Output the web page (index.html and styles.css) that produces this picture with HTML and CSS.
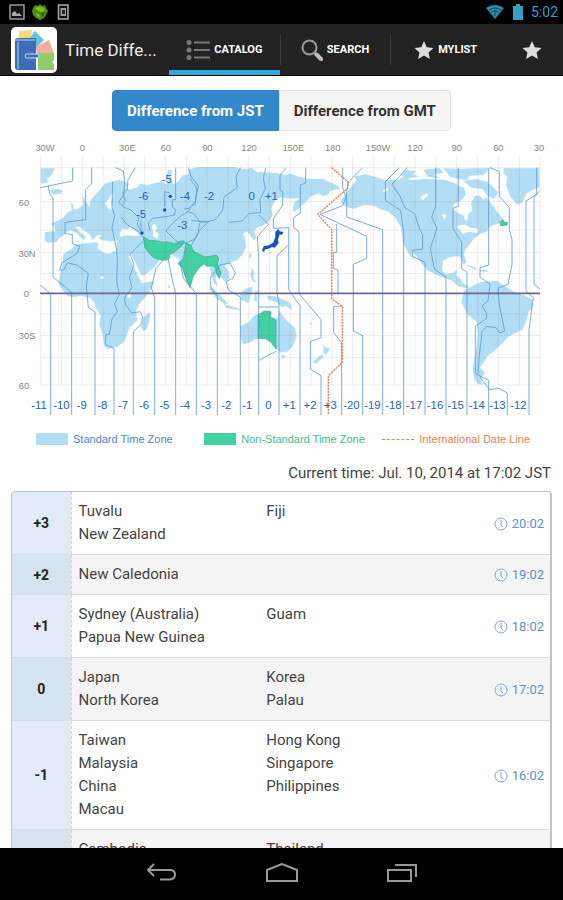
FILE: index.html
```html
<!DOCTYPE html>
<html lang="en">
<head>
    <meta charset="UTF-8">
    <meta name="viewport" content="width=device-width, initial-scale=1">
    <title>Time Difference</title>
    <link rel="stylesheet" href="styles.css">
</head>
<body>
<div class="status">
    <svg width="16" height="16" viewBox="0 0 16 16"><path d="M1 1h14v14H1z" fill="#111" stroke="#999" stroke-width="1.5"/><path d="M3 12V9l3-2 2 3 2-1 3 3z" fill="#aaa"/></svg>
    <svg width="16" height="16" viewBox="0 0 16 16"><path d="M8 0l2 2 3-1 1 3 2 3-2 4-2 3-4 2-4-2-3-3-1-4 1-3 2-3 3 1z" fill="#4c8a16"/><path d="M3 4l5-2 5 3-2 3-5-1zM4 9l3 1 1 4-3-2z" fill="#7fb92b"/><path d="M9 9l4-1-2 5z" fill="#2f6110"/></svg>
    <svg width="16" height="16" viewBox="0 0 16 16"><path d="M3.500 1h9.500v14H3.500z" fill="#111" stroke="#aaa" stroke-width="1.500"/><path d="M5.500 4h5.500v8H5.500z" fill="#999"/><path d="M7 6h3v4H7z" fill="#222"/></svg>
    <span class="space"></span>
    <svg width="20" height="16" viewBox="0 0 20 16"><path d="M1 4Q10-2 19 4L10 15z" fill="#2d8db0"/><path d="M4 6q6-4 12 0M6 8q4-3 8 0M10 6v6" fill="none" stroke="#12465a" stroke-width="1"/></svg>
    <svg width="12" height="16" viewBox="0 0 12 16"><path d="M4 0h4v2h3v14H1V2h3z" fill="#3a9fc6"/></svg>
    <span class="clock">5:02</span>
</div>
<header class="bar">
    <svg class="logo" width="46" height="46" viewBox="0 0 46 46">
        <rect width="46" height="46" rx="5" fill="#fff"/>
        <path d="M8 4l13-1-2 12H8z" fill="#f6da74"/>
        <path d="M17 13l7-9 9 9-8 8z" fill="#65c7d6"/>
        <path d="M25 20l13-7 5 14H26z" fill="#f4aaa5"/>
        <path d="M27 26h16v7l-2 2 2 2v6H27z" fill="#8dce68"/>
        <path d="M4 13q0-2 3-2h18v32H7q-3 0-3-3z" fill="#3e6db8"/>
        <path d="M4 13h20M7 15v27" stroke="#bdd3ef" stroke-width="1" fill="none"/>
        <rect x="14" y="27" width="14" height="4" rx="2" fill="#3e6db8" stroke="#c8dcf3"/>
    </svg>
    <h1>Time Diffe...</h1>
    <nav class="tabs">
        <a class="tab active" href="#catalog">
            <svg width="24" height="20" viewBox="0 0 24 20"><g fill="#777"><circle cx="3" cy="2.500" r="2.500"/><circle cx="3" cy="10" r="2.500"/><circle cx="3" cy="17.500" r="2.500"/><path d="M8 1.500h16v2H8zM8 9h16v2H8zM8 16.500h16v2H8z"/></g></svg>
            CATALOG
        </a>
        <a class="tab" href="#search">
            <svg width="22" height="22" viewBox="0 0 22 22"><circle cx="8.500" cy="8.500" r="7" fill="none" stroke="#999" stroke-width="2"/><path d="M13 13l3 3" stroke="#999" stroke-width="2"/><path d="M15.500 15.500l4.500 4.500" stroke="#bbb" stroke-width="4" stroke-linecap="round"/></svg>
            SEARCH
        </a>
        <a class="tab" href="#mylist">
            <svg width="20" height="20" viewBox="0 0 20 20"><path d="M10 1l2.800 6.200 6.700.7-5 4.500 1.400 6.600-5.900-3.400L4.100 19l1.400-6.600-5-4.500 6.700-.7z" fill="#ddd"/></svg>
            MYLIST
        </a>
    </nav>
    <button class="star" aria-label="Favorites">
        <svg width="20" height="20" viewBox="0 0 20 20"><path d="M10 1l2.800 6.200 6.700.7-5 4.500 1.400 6.600-5.900-3.400L4.100 19l1.400-6.600-5-4.500 6.700-.7z" fill="#ddd"/></svg>
    </button>
</header>
<main>
    <div class="switch">
        <button class="on">Difference from JST</button>
        <button>Difference from GMT</button>
    </div>
    <!-- world map, 3 units to the pixel at 563 wide -->
    <svg class="map" viewBox="0 0 1689 852">
        <g class="land">
            <path d="M122 100h42l-8 20-16 12 5 10-23 4z"/>
            <path d="M150 166l25-5 12 6-6 9-22 3z"/>
            <path d="M213 205l8 5-2 10 10 8 15 15-3 8-22 4 7-12-10-12zM205 230l10 4-4 14-12-2z"/>
            <path d="M268 215l4-20 22-25 22-25 26-6 14-5 20 6 10 8-8 10 12 6 22-8 8-10 22 4 24-6 20-4 12 8 10-8-10-18 6-16 12 0-4 30 10 12 14-10 10-16 20-6-2-12 30-8h110l22 7 30-4 14 12 60 3 30 6 10-4 40 12 14 4h44l22 10 24 10 6 10-30 5-6 12-16 4-14-8-24 12-12 14-18 16-18 14-4-8 6-22 16-12-38 2-20-4-16 8-12 24 4 22-10 18-22 14-14 4-10 12 8 18-10 8-12-18-8-8-12 8 8 14 2 24-10 22-16 18-22 8-16 8 12 20 2 18-12 12-12-12-14-12-4 12 8 28-14-16-8-32-10-30-16 4-20 14-8 24-12 20-14-22-12-32-2-14-12-8-14-10-24-4-10 12 0 14-14 18-26 22-26 12-18 6-14-26-22-40-10-30 4-22-22 2-28-4-6-8 10-4-14-4-14 16-8-16-16-12-14-10-16-2 18 18 16 14-6 8-24-22-16-8-12 6-6 8-16 10-8 12-28 2-8-8 2-24 30-2-4-18-12-4 20-8 16-8 14-16 14-8 20-6 16-12-2-26z"/>
            <path d="M190 358l24-16 14-14 60-6 8 4-4 14 20 14 18 2 12-8 40 6 10 16 12 24 14 28 8 20 36-4-14 34-32 38-8 18 4 28-24 22-6 18-10 24-18 14-30 8-12-10-4-36-10-26 4-28-14-22-6-20-12-12-26-6-22 4-18-2-16-18-12-18 2-22 8-28z"/>
            <path d="M448 532l3 10-10 40-10 6-8-10 6-30zM506 446l5 12-7 2z"/>
            <path d="M750 354l5 3-4 14-5-6zM755 400l8 10-2 20 8 12-10-2-8-20zM720 475l22-16 16-3-5 22-8 26-22-10zM630 452l20 18 32 34-6 5-25-18-22-26zM672 508l40 10 10 8-44-8zM765 470l14-4-9 12 2 22-10-4zM800 482l24 2 20 8 24 10 10 22-20-10-14 2-16-16-22-6zM843 660l16 2-9 10z"/>
            <path d="M720 574l26-12 16-20 12-4 20-10 22 2-2 14 18 8 6-26 12 20 12 12 22 20 6 26-12 30-16 16-22 2-14-16-8-16-24-10-28 2-14 10-22 6-8-16z"/>
            <path d="M970 630l8 8 12 2-12 20-8-6zM964 658l8 6-24 22-10-4zM930 560l8 6-3 4z"/>
            <path d="M1057 150l12-14-6-12 36-6 60 18 34-2 20-8 20 10 40-4 60 2 30 10 16 10 14 6 4 20-12 14-24 14-2 14 12 10 20 10 4 14h8l2-20 12-8-4-24 12-22 14 0 12 12 8-8 20 26 20 28 12 12-12 12-28 10-12 16-20 8-18 14-22 28-8 18 8 22-8 10-12-26-30 2-20 12-4 28 12 12 22-4 12-10-2 18 12 8 6 14 22 12-8 3-24-4-20-18-34-12-38-18-20-20-12-20-20-20 12 32-16-20-20-32-6-50-12-20-8-12-20-16-20-6-20-10-26-4-36 12-20-4-20-16z"/>
            <path d="M1202 120l16-15 30 3-10 10 20 6-40 8zM1270 104l50-4 10 14-30 4 20 12-36-4zM1330 100l50 2 40-2 50 0-20 20-40 2-10 14-50-10zM1390 138l40-6 34 10 30 30-12 20-20-10-14-20-34-4z"/>
            <path d="M1510 100h108v56l-18 8-20 10-14 30-16 4-20-24-12-34 4-24-12-12z"/>
            <path d="M1392 386l24 8 18 8-8 2zM1440 404l20 0 4 6-24 0zM1426 448l22-8 44-2 20 14 22 14 14 8 22 6 28 14 2 18-14 18-6 24-12 30-22 10-24 14-20 22-22 20-18 14-14 22-8 12 14 14-4 10-8 6 6 22-14-4-12-14-4-32 8-38 8-60-4-42-28-22-18-36 8-34z"/>
        </g>
        <g class="sea">
            <path d="M360 294l8-14 14 4 10-8 22 18 2 10-34-3-22 5zM456 272l8-6 8 12-6 10 10 10-4 14-12-8-2-18zM392 355l12 22 20 44 8 13 26-4 2 8-34 6-12-22-28-58zM315 204l12-14 8-14 6 4-8 20 6 24-14-2z"/>
            <path d="M1150 164l16-6-4 10-14 4zM1260 186l20-12 4 8-16 14zM1326 240l8-4 6 8-8 8zM1370 274l24-6 18 10 24 4-6 12-20-4-22 6z"/>
            <circle cx="306" cy="427" r="5"/><circle cx="388" cy="482" r="6"/>
        </g>
        <g class="nonstd">
            <path d="M430 306l18 10 22 2 20 4 10-2 24 6 18-8 12 0-8 14-24 20-12 6-4 16-20 2-26-8-16-18-10-14z"/>
            <path d="M558 324l14 6 10 20 34 16 34-6 6 12-4 14 10 26-4 18-8-12-4-20-8-6-18 2-8-8-16 14-16 24-10 34-12-26-10-32-14-14 16-16z"/>
            <path d="M774 540l20-12 18 2-2 16 18 10 0 86-16-22-16-10-22 0z"/>
            <path d="M1500 262l8-8 6 8 8 0 0 8-20 2z"/>
        </g>
        <path class="grid" d="M122 65V750M184 65V750M247 65V750M309 65V750M372 65V750M434 65V750M496 65V750M559 65V750M621 65V750M684 65V750M746 65V750M808 65V750M871 65V750M933 65V750M996 65V750M1058 65V750M1121 65V750M1183 65V750M1245 65V750M1308 65V750M1370 65V750M1433 65V750M1495 65V750M1558 65V750M1620 65V750M122 98H1620M122 200H1620M122 285H1620M122 352H1620M122 416H1620M122 537H1620M122 601H1620M122 668H1620M122 750H1620"/>
        <path class="zone" d="M120 158l98-20V98M275 98v48l-18 18v90l-62 8v34l22 2v28l22 8-6 20-48 30-6 22 14-2 8-20 30 6 34 26-6 36 6 66 20 12V840M145 152l4 24 10 14v236l56 46V840M120 450l32 26V840"/>
        <path class="zone" d="M406 98l-22 36-2 30-14 8 8 26-10 14M348 98l22 10 4 30-2 40-16 24 14 14 24 10 22 22-4 20 12 22M338 140l-2 78 8 24-8 36 14 68 2 32-2 60 8 40-14 30 8 20-16 24-8 46-10 0-2 30 26 12V840M430 318l-40 40 12 30-14 40 8 30-22 30 2 20 20 26 24-4 8 16-4 22-24 22V840M527 98v96l-10 0v22l10 8-4 16-20 4-44 6-14 14 4 22M494 168v48M494 172h16M423 256v34M565 98l10 30 20 24-8 44-24 34M498 288l16-20 30-26 20-12 18 6 16 22 28 2-26 24-14 28-40 16-22-14zM430 306l-16-18-34-20-16-22"/>
        <path class="zone" d="M490 375l-22 24-14 60 10 30V840M505 375l12 60 10 40V840M540 380l10 50 39 46V840M570 130l20 30-4 46-20 14-14 2M722 98l-14 26 4 34-40 28-4 40-22 28-32 8-40-6M600 262l-6 30-20 40M798 98l-8 30 6 32-16 34 2 38-36 4-20 22-40 4M776 240l30 28-24 26-10 12 4 58V840M652 840V484l-20-30 0-28 28-36 30-6 16 30-8 16-20 10 8 26 35 20V840M860 98l-20 22v46l8 4v40l-28 42v28l46-2v186l34 48V840M917 98v46l-16 6v84l-20 14v30l16 12v186l66 78v54l-32 12v82l32 20V840M863 332l-32 30v112l6 30V840M776 676l54-28"/>
        <path class="zone" d="M774 516h62M1028 98v60l10 30-10 24-68 26 140 66v66l-40 18v200l28 14V840M1088 98l-42 42-6 30v76l108 38V840M1010 266v86l-10 0v48l14 6v68M1025 840V624l-24-32v-78h24"/>
        <path class="zone" d="M1198 98l-42 42v56l46 30 9 70V840M1222 98l-46 50 24 36 14 34 30 18 16 50 8 12v44l-30 4v18l37 18V840M1307 98v114l-12 34 16 34-20 60 12 62 35 24V840M1375 98v116l-16 6v60l26 42v78l16 12V840M1466 100v290l-26 8v28l30 22-6 50-18 14 14 24v14l-34 24v142l40 20V840M1470 98l28 12v74l30 34v66l8 30v74l-12 60-30 12 4 50 16 78-14 6-12-16-28-4-14 16-8 72-4 54 16 24 18 24 30-4 24 14V840M1610 98v80l-32 20v270l22 20-6 42-7 54V840M1618 168l-16 20v260l18 14"/>
        <path class="japan" d="M826 292l8-10 5 7 12 2-6 9-6-2-5 16 2 10-12 14-8-2-12 6-8 0-4 9-6-4 5-13 16-3 12-8 7-16z"/>
        <circle class="dot" cx="511" cy="184" r="5"/><circle class="dot" cx="494" cy="225" r="5"/><circle class="dot" cx="426" cy="294" r="5"/>
        <path class="equator" d="M120 475H1620"/>
        <path class="date" d="M995 98l48 42v20l-90 78 42 46V492l32 22v168l-42 40V840"/>
        <g class="axis">
            <text x="135" y="49">30W</text><text x="247" y="49">0</text><text x="382" y="49">30E</text><text x="497" y="49">60</text><text x="622" y="49">90</text><text x="747" y="49">120</text><text x="880" y="49">150E</text><text x="998" y="49">180</text><text x="1134" y="49">150W</text><text x="1245" y="49">120</text><text x="1370" y="49">90</text><text x="1495" y="49">60</text><text x="1617" y="49">30</text>
            <text x="72" y="214">60</text><text x="81" y="365">30N</text><text x="79" y="486">0</text><text x="81" y="613">30S</text><text x="72" y="761">60</text>
        </g>
        <g class="num">
            <text x="430" y="195">-6</text><text x="500" y="143">-5</text><text x="555" y="195">-4</text><text x="627" y="195">-2</text><text x="755" y="195">0</text><text x="814" y="195">+1</text><text x="423" y="250">-5</text><text x="547" y="283">-3</text>
            <text x="117" y="823">-11</text><text x="184" y="823">-10</text><text x="245" y="823">-9</text><text x="307" y="823">-8</text><text x="369" y="823">-7</text><text x="432" y="823">-6</text><text x="493" y="823">-5</text><text x="555" y="823">-4</text><text x="618" y="823">-3</text><text x="679" y="823">-2</text><text x="742" y="823">-1</text><text x="805" y="823">0</text><text x="868" y="823">+1</text><text x="930" y="823">+2</text><text x="991" y="823">+3</text><text x="1054" y="823">-20</text><text x="1117" y="823">-19</text><text x="1180" y="823">-18</text><text x="1242" y="823">-17</text><text x="1305" y="823">-16</text><text x="1367" y="823">-15</text><text x="1430" y="823">-14</text><text x="1492" y="823">-13</text><text x="1555" y="823">-12</text>
        </g>
    </svg>
    <ul class="legend">
        <li class="std"><i></i>Standard Time Zone</li>
        <li class="non"><i></i>Non-Standard Time Zone</li>
        <li class="line"><i></i>International Date Line</li>
    </ul>
    <p class="now">Current time: Jul. 10, 2014 at 17:02 JST</p>
    <div class="box">
        <table>
            <tr>
                <th>+3</th>
                <td><ul><li>Tuvalu</li><li>Fiji</li><li>New Zealand</li></ul></td>
                <td class="time"><svg viewBox="0 0 14 14"><use href="#clock"/></svg>20:02</td>
            </tr>
            <tr>
                <th>+2</th>
                <td><ul><li>New Caledonia</li></ul></td>
                <td class="time"><svg viewBox="0 0 14 14"><use href="#clock"/></svg>19:02</td>
            </tr>
            <tr>
                <th>+1</th>
                <td><ul><li>Sydney (Australia)</li><li>Guam</li><li>Papua New Guinea</li></ul></td>
                <td class="time"><svg viewBox="0 0 14 14"><use href="#clock"/></svg>18:02</td>
            </tr>
            <tr>
                <th>0</th>
                <td><ul><li>Japan</li><li>Korea</li><li>North Korea</li><li>Palau</li></ul></td>
                <td class="time"><svg viewBox="0 0 14 14"><use href="#clock"/></svg>17:02</td>
            </tr>
            <tr>
                <th>-1</th>
                <td><ul><li>Taiwan</li><li>Hong Kong</li><li>Malaysia</li><li>Singapore</li><li>China</li><li>Philippines</li><li>Macau</li></ul></td>
                <td class="time"><svg viewBox="0 0 14 14"><use href="#clock"/></svg>16:02</td>
            </tr>
            <tr>
                <th></th>
                <td><ul><li>Cambodia</li><li>Thailand</li></ul></td>
                <td class="time"></td>
            </tr>
        </table>
    </div>
</main>
<footer class="keys">
    <button aria-label="Back"><svg width="32" height="20" viewBox="0 0 32 20"><path d="M8 1L2 7l6 6M2 7h22q5 0 5 4.500T24 16.500H14"/></svg></button>
    <button aria-label="Home"><svg width="34" height="20" viewBox="0 0 34 20"><path d="M2 18V7l15-6 15 6v11z"/></svg></button>
    <button aria-label="Recent apps"><svg width="32" height="20" viewBox="0 0 32 20"><path d="M2 7h23v11H2zM9 2h21v12"/></svg></button>
</footer>
<svg class="defs"><defs><g id="clock"><circle cx="7" cy="7" r="6" fill="none" stroke="#86a5d2"/><path d="M7 3v5l2 2" fill="none" stroke="#86a5d2"/></g></defs></svg>
</body>
</html>
```
FILE: styles.css
```css
*{
    margin: 0;
    padding: 0;
    box-sizing: border-box;
}
body{
    display: flex;
    flex-direction: column;
    height: 100vh;
    overflow: hidden;
    background-color: #fff;
    color: #444;
    font-family: Roboto, "Liberation Sans", sans-serif;
    font-size: 15px;
}
ul{
    list-style: none;
}
button{
    border: 0;
    background: none;
    font-family: inherit;
}
.status{
    display: flex;
    align-items: center;
    gap: 7px;
    flex: none;
    height: 24px;
    padding: 0 5px 0 9px;
    background-color: #000;
}
.space{
    flex: 1;
}
.clock{
    color: #3a9fc6;
    font-size: 14px;
}
.bar{
    display: flex;
    align-items: center;
    flex: none;
    height: 52px;
    padding-left: 11px;
    background-color: #222;
    border-bottom: 1px solid #000;
}
.logo{
    flex: none;
}
.bar h1{
    width: 112px;
    padding-left: 8px;
    color: #eee;
    font-size: 17px;
    font-weight: 400;
    white-space: nowrap;
}
.tabs{
    display: flex;
    flex: 1;
    height: 100%;
}
.tab{
    display: flex;
    flex: 1;
    align-items: center;
    justify-content: center;
    gap: 4px;
    position: relative;
    border-bottom: 5px solid transparent;
    border-top: 5px solid transparent;
    color: #fff;
    font-size: 11px;
    font-weight: 700;
    text-decoration: none;
}
.tab.active{
    border-bottom-color: #2fa8e0;
}
.tab + .tab::before{
    content: "";
    position: absolute;
    left: 0;
    top: 6px;
    width: 1px;
    height: 30px;
    background-color: #3c3c3c;
}
.star{
    width: 62px;
}
.star svg{
    display: block;
    margin: 0 auto;
}
main{
    flex: 1;
    min-height: 0;
    overflow: hidden;
}
.switch{
    display: flex;
    justify-content: center;
    padding: 14px 0 4px;
}
.switch button{
    height: 41px;
    padding: 0 14px;
    border: 1px solid #e2e2e2;
    border-radius: 0 4px 4px 0;
    background-color: #f5f5f5;
    color: #333;
    font-size: 15px;
    font-weight: 700;
}
.switch .on{
    border-color: #2b82c9;
    border-radius: 4px 0 0 4px;
    background-color: #3288cb;
    color: #fff;
}
.map{
    display: block;
    width: 100%;
}
.land{
    fill: #b1def5;
}
.sea{
    fill: #fff;
}
.nonstd{
    fill: #42d1a2;
    stroke: #3aa98f;
    stroke-width: 2;
}
.grid{
    fill: none;
    stroke: #806060;
    stroke-opacity: .13;
    stroke-width: 3;
}
.zone{
    fill: none;
    stroke: #5b9ad0;
    stroke-opacity: .8;
    stroke-width: 3;
}
.japan,
.dot{
    fill: #1450c0;
}
.equator{
    stroke: #6c6792;
    stroke-width: 5;
}
.date{
    fill: none;
    stroke: #f4764d;
    stroke-width: 4;
    stroke-dasharray: 6 3;
}
.map text{
    font-family: "Liberation Sans", Arial, sans-serif;
    text-anchor: middle;
}
.axis{
    fill: #888;
    font-size: 28px;
}
.num{
    fill: #2660bb;
    font-size: 34px;
}
.legend{
    display: flex;
    justify-content: space-between;
    padding: 14px 33px 0 36px;
    font-family: "Liberation Sans", Arial, sans-serif;
    font-size: 11px;
    line-height: 12px;
}
.legend li{
    display: flex;
    align-items: center;
    gap: 5px;
}
.legend i{
    width: 32px;
    height: 12px;
}
.legend .non{
    margin-left: 14px;
}
.std{
    color: #4c84d0;
}
.std i{
    background-color: #b1def5;
}
.non{
    color: #45bd91;
}
.non i{
    background-color: #42d1a2;
}
.line{
    color: #f4824f;
}
.legend .line i{
    height: 0;
    border-top: 1px dashed #f4824f;
}
.now{
    padding: 18px 12px 8px;
    text-align: right;
    line-height: 20px;
}
.box{
    margin: 0 11px;
    border: 1px solid #c4c4c4;
    border-right-width: 2px;
    border-radius: 4px;
    overflow: hidden;
}
table{
    width: 100%;
    border-collapse: collapse;
}
tr{
    border-bottom: 1px solid #d8dcdf;
}
tr:nth-child(even){
    background-color: #f4f4f4;
}
th{
    width: 59px;
    border-right: 1px dashed #cdd6e0;
    background-color: #e2ebf7;
    color: #222;
    font-size: 14px;
}
tr:nth-child(even) th{
    background-color: #d5e4ee;
}
td{
    padding: 8px 0 8px 7px;
}
td ul{
    display: grid;
    grid-template-columns: 1fr 1fr;
    line-height: 23px;
}
.time{
    width: 96px;
    padding: 0 6px 0 0;
    color: #628dcc;
    font-size: 13px;
    text-align: right;
}
.time svg{
    width: 14px;
    height: 14px;
    margin-right: 4px;
    vertical-align: -3px;
}
.keys{
    display: flex;
    align-items: center;
    justify-content: center;
    gap: 20px;
    flex: none;
    height: 52px;
    background-color: #000;
}
.keys button{
    width: 100px;
}
.keys svg{
    fill: none;
    stroke: #999;
    stroke-width: 2;
}
.defs{
    position: absolute;
    width: 0;
    height: 0;
}
```
